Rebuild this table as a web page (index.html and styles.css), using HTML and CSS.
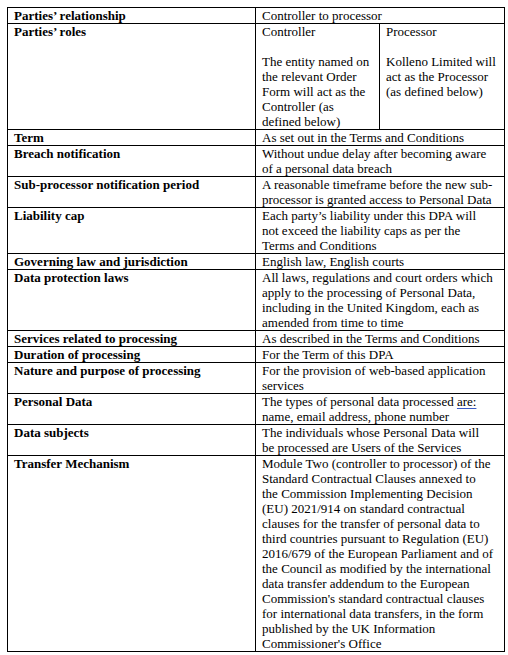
FILE: index.html
```html
<!DOCTYPE html>
<html lang="en">
<head>
<meta charset="utf-8">
<title>DPA details</title>
<link rel="stylesheet" href="styles.css">
</head>
<body>
<div class="page">
<table class="dpa">
  <colgroup><col class="c-label"><col class="c-value"></colgroup>
  <tbody>
    <tr><td class="label">Parties’ relationship</td><td class="value">Controller to processor</td></tr>
    <tr>
      <td class="label">Parties’ roles</td>
      <td class="value split-cell">
        <div class="split">
          <div class="part">Controller<br><br>The entity named on<br>the relevant Order<br>Form will act as the<br>Controller (as<br>defined below)</div>
          <div class="part part-right">Processor<br><br>Kolleno Limited will<br>act as the Processor<br>(as defined below)</div>
        </div>
      </td>
    </tr>
    <tr><td class="label">Term</td><td class="value">As set out in the Terms and Conditions</td></tr>
    <tr><td class="label">Breach notification</td><td class="value">Without undue delay after becoming aware<br>of a personal data breach</td></tr>
    <tr><td class="label">Sub-processor notification period</td><td class="value">A reasonable timeframe before the new sub-<br>processor is granted access to Personal Data</td></tr>
    <tr><td class="label">Liability cap</td><td class="value">Each party’s liability under this DPA will<br>not exceed the liability caps as per the<br>Terms and Conditions</td></tr>
    <tr><td class="label">Governing law and jurisdiction</td><td class="value">English law, English courts</td></tr>
    <tr><td class="label">Data protection laws</td><td class="value">All laws, regulations and court orders which<br>apply to the processing of Personal Data,<br>including in the United Kingdom, each as<br>amended from time to time</td></tr>
    <tr><td class="label">Services related to processing</td><td class="value">As described in the Terms and Conditions</td></tr>
    <tr><td class="label">Duration of processing</td><td class="value">For the Term of this DPA</td></tr>
    <tr><td class="label">Nature and purpose of processing</td><td class="value">For the provision of web-based application<br>services</td></tr>
    <tr><td class="label">Personal Data</td><td class="value">The types of personal data processed <span class="squiggle">are:</span><br>name, email address, phone number</td></tr>
    <tr><td class="label">Data subjects</td><td class="value">The individuals whose Personal Data will<br>be processed are Users of the Services</td></tr>
    <tr><td class="label">Transfer Mechanism</td><td class="value">Module Two (controller to processor) of the<br>Standard Contractual Clauses annexed to<br>the Commission Implementing Decision<br>(EU) 2021/914 on standard contractual<br>clauses for the transfer of personal data to<br>third countries pursuant to Regulation (EU)<br>2016/679 of the European Parliament and of<br>the Council as modified by the international<br>data transfer addendum to the European<br>Commission's standard contractual clauses<br>for international data transfers, in the form<br>published by the UK Information<br>Commissioner's Office</td></tr>
  </tbody>
</table>
</div>
</body>
</html>
```

FILE: styles.css
```css
html, body {
  margin: 0;
  padding: 0;
  background: #ffffff;
}

.page {
  padding: 7px 0 0 7px;
}

.dpa {
  border-collapse: collapse;
  table-layout: fixed;
  width: 497px;
  font-family: "Liberation Serif", "Times New Roman", serif;
  font-size: 13px;
  line-height: 15px;
  color: #000;
}

.c-label { width: 248px; }
.c-value { width: 249px; }

.dpa .label,
.dpa .value {
  border: 1px solid #000;
  padding: 0 0 0 6px;
  vertical-align: top;
  text-align: left;
  white-space: nowrap;
  overflow: hidden;
  font-family: "Liberation Serif", "Times New Roman", serif;
  font-size: 13px;
  line-height: 15px;
}

.dpa .label {
  font-weight: 700;
}

.dpa .value {
  font-weight: 400;
}

.dpa .split-cell {
  padding: 0;
}

.split {
  display: grid;
  grid-template-columns: 123px 1fr;
}

.part {
  padding-left: 6px;
}

.part-right {
  border-left: 1px solid #000;
}

.squiggle {
  text-decoration: underline;
  text-decoration-color: #3b5bc4;
  text-underline-offset: 2px;
}
```
